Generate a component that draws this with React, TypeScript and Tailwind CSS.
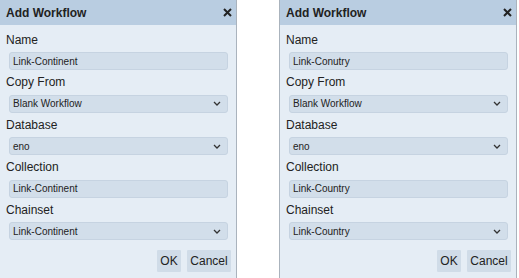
import React from 'react';

interface Field {
  label: string;
  value: string;
  select?: boolean;
}

const Chevron = () => (
  <svg width="8" height="5" viewBox="0 0 8 5" className="shrink-0">
    <polyline points="1,1 4,4 7,1" fill="none" stroke="#333" strokeWidth="1.3" />
  </svg>
);

const CloseIcon = () => (
  <svg width="9" height="9" viewBox="0 0 9 9">
    <path d="M1 1L8 8M8 1L1 8" stroke="#222" strokeWidth="2" />
  </svg>
);

const Dialog: React.FC<{ fields: Field[]; className?: string }> = ({ fields, className }) => (
  <div
    className={`w-[238px] h-[278px] shrink-0 flex flex-col bg-[#e5edf5] border-x border-[#aab3bd] ${className ?? ''}`}
  >
    <div className="h-[25px] flex items-center justify-between pl-[6px] pr-[4px] bg-[#b9cde1]">
      <span className="text-[12px] leading-[16px] font-bold text-[#222]">Add Workflow</span>
      <CloseIcon />
    </div>
    <div className="flex flex-col pt-[2.5px]">
      {fields.map((f) => (
        <div key={f.label} className="flex flex-col">
          <div className="pl-[6px] pt-[4px] pb-[4.5px] text-[12px] leading-[16px] text-[#222]">{f.label}</div>
          <div className="ml-[9px] mr-[8px] h-[18px] flex items-center justify-between pl-[3px] pr-[6px] bg-[#d2deea] border border-[#c6d3e1] rounded-[3px] text-[10px] text-[#222]">
            <span>{f.value}</span>
            {f.select && <Chevron />}
          </div>
        </div>
      ))}
      <div className="flex justify-end gap-[6px] pr-[5px] mt-[10px]">
        <button className="h-[22px] w-[24px] bg-[#d0dce8] rounded-[1px] text-[12px] text-[#222]">OK</button>
        <button className="h-[22px] w-[44px] bg-[#d0dce8] rounded-[1px] text-[12px] text-[#222]">Cancel</button>
      </div>
    </div>
  </div>
);

const fieldsFor = (name: string, chainset: string): Field[] => [
  { label: 'Name', value: name },
  { label: 'Copy From', value: 'Blank Workflow', select: true },
  { label: 'Database', value: 'eno', select: true },
  { label: 'Collection', value: chainset },
  { label: 'Chainset', value: chainset, select: true },
];

export default function App() {
  return (
    <div
      className="w-[519px] h-[278px] bg-white flex overflow-hidden"
      style={{ fontFamily: '"Liberation Sans", Arial, sans-serif' }}
    >
      <Dialog fields={fieldsFor('Link-Continent', 'Link-Continent')} className="-ml-px" />
      <Dialog fields={fieldsFor('Link-Conutry', 'Link-Country')} className="ml-[42px]" />
    </div>
  );
}
